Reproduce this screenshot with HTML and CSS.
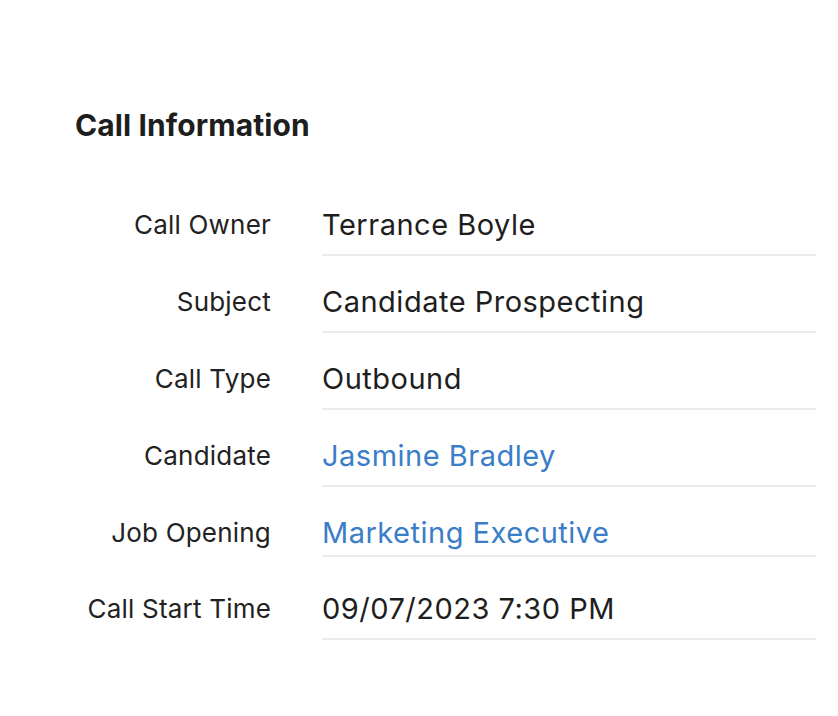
FILE: index.html
```html
<!DOCTYPE html>
<html lang="en">
<head>
  <meta charset="UTF-8">
  <title>Call Information</title>
  <meta name="viewport" content="width=device-width, initial-scale=1.0">
  <link rel="stylesheet" href="styles.css">
</head>
<body>

  <!-- Call details panel -->
  <div class="panel">
    <h2 class="panel-title">Call Information</h2>

    <div class="details">
      <div class="row">
        <div class="label">Call Owner</div>
        <div class="value">Terrance Boyle</div>
      </div>
      <div class="row">
        <div class="label">Subject</div>
        <div class="value">Candidate Prospecting</div>
      </div>
      <div class="row">
        <div class="label">Call Type</div>
        <div class="value">Outbound</div>
      </div>
      <div class="row">
        <div class="label">Candidate</div>
        <div class="value"><a class="link" href="#">Jasmine Bradley</a></div>
      </div>
      <div class="row row-short">
        <div class="label">Job Opening</div>
        <div class="value"><a class="link" href="#">Marketing Executive</a></div>
      </div>
      <div class="row row-tall">
        <div class="label">Call Start Time</div>
        <div class="value">09/07/2023 7:30 PM</div>
      </div>
    </div>
  </div>

</body>
</html>
```

FILE: styles.css
```css
body {
  margin: 0;
  padding: 0;
  font-family: Inter, "Noto Sans", sans-serif;
  background-color: #fff;
  color: #1e1e1e;
}

.panel {
  padding: 106px 22px 0 75px;
}

.panel-title {
  margin: 0;
  font-size: 30px;
  font-weight: 700;
  line-height: 38px;
  letter-spacing: 0.1px;
}

.details {
  margin-top: 35px;
}

.row {
  display: flex;
  align-items: stretch;
}

.label {
  width: 196px;
  flex-shrink: 0;
  text-align: right;
  font-size: 26px;
  line-height: 32px;
  letter-spacing: 0.2px;
  padding-top: 30px;
  color: #222;
}

.value {
  flex: 1;
  margin-left: 51px;
  padding: 28px 0 11px;
  font-size: 29px;
  line-height: 36px;
  letter-spacing: 0.5px;
  border-bottom: 2px solid #ebebeb;
}

.row-short .value {
  padding-bottom: 4px;
}

.row-tall .label {
  padding-top: 36px;
}

.row-tall .value {
  padding-top: 34px;
}

.link {
  color: #3a7dc9;
  text-decoration: none;
}
```
